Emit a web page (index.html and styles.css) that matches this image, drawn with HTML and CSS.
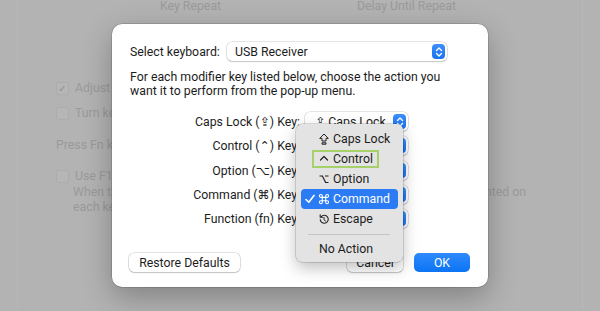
FILE: index.html
```html
<!DOCTYPE html>
<html lang="en">
<head>
    <meta charset="UTF-8">
    <meta name="viewport" content="width=device-width, initial-scale=1.0">
    <title>Modifier Keys</title>
    <link rel="stylesheet" href="styles.css">
</head>
<body>

<div class="prefs">
    <div class="sliderLabels">
        <span class="keyRepeat">Key Repeat</span>
        <span>Delay Until Repeat</span>
    </div>
    <div class="bgOptions">
        <div class="checkRow"><span class="box">&#10003;</span>Adjust keyboard brightness in low light</div>
        <div class="checkRow second"><span class="box"></span>Turn keyboard backlight off after 5 secs of inactivity</div>
        <div class="fnRow">Press Fn key to&nbsp;&nbsp;Show Emoji &amp; Symbols</div>
        <div class="checkRow fourth"><span class="box"></span>Use F1, F2, etc. keys as standard function keys</div>
        <p class="hint">When this option is selected, press the Fn key to use the special features printed on<br>each key.</p>
    </div>
</div>

<div class="sheet">
    <div class="kbRow">
        <span class="kbLabel">Select keyboard:</span>
        <div class="popup wide">
            <span class="popupText">USB Receiver</span>
            <span class="stepper">
                <svg width="8" height="12" viewBox="0 0 8 12"><path d="M1.5 4.5 L4 2 L6.5 4.5 M1.5 7.5 L4 10 L6.5 7.5" fill="none" stroke="#fff" stroke-width="1.4" stroke-linecap="round" stroke-linejoin="round"/></svg>
            </span>
        </div>
    </div>

    <p class="intro">For each modifier key listed below, choose the action you<br>want it to perform from the pop-up menu.</p>

    <div class="keys">
        <label>Caps Lock (&#8682;) Key:</label>
        <div class="popup"><span class="popupText">&#8682; Caps Lock</span><span class="stepper"><svg width="8" height="12" viewBox="0 0 8 12"><path d="M1.5 4.5 L4 2 L6.5 4.5 M1.5 7.5 L4 10 L6.5 7.5" fill="none" stroke="#fff" stroke-width="1.4" stroke-linecap="round" stroke-linejoin="round"/></svg></span></div>

        <label>Control (&#8963;) Key:</label>
        <div class="popup"><span class="popupText">&#8963; Control</span><span class="stepper"></span></div>

        <label>Option (&#8997;) Key:</label>
        <div class="popup"><span class="popupText">&#8997; Option</span><span class="stepper"></span></div>

        <label>Command (&#8984;) Key:</label>
        <div class="popup"><span class="popupText">&#8984; Command</span><span class="stepper"></span></div>

        <label>Function (fn) Key:</label>
        <div class="popup"><span class="popupText">fn Function</span><span class="stepper"></span></div>
    </div>

    <div class="buttons">
        <button class="btn restore">Restore Defaults</button>
        <span class="spacer"></span>
        <button class="btn small">Cancel</button>
        <button class="btn small primary">OK</button>
    </div>

    <div class="menu">
        <div class="item">
            <span class="check"></span>
            <svg class="icon" width="10" height="12" viewBox="0 0 10 12"><path d="M5 1 L9.3 5.4 H7 V8 H3 V5.4 H0.7 Z M3 9.8 H7 V11.2 H3 Z" fill="none" stroke="#222" stroke-width="1" stroke-linejoin="round"/></svg>
            <span>Caps Lock</span>
        </div>
        <div class="item">
            <span class="check"></span>
            <span class="annot">
                <svg class="icon" width="10" height="12" viewBox="0 0 10 12"><path d="M1.5 7 L5 3.5 L8.5 7" fill="none" stroke="#222" stroke-width="1.2" stroke-linecap="round" stroke-linejoin="round"/></svg>
                <span>Control</span>
            </span>
        </div>
        <div class="item">
            <span class="check"></span>
            <svg class="icon" width="10" height="12" viewBox="0 0 10 12"><path d="M0.5 3 H3.4 L6.6 9.5 H9.5 M6 3 H9.5" fill="none" stroke="#222" stroke-width="1.2"/></svg>
            <span>Option</span>
        </div>
        <div class="item selected">
            <span class="check"><svg width="10" height="10" viewBox="0 0 10 10"><path d="M1 5.5 L3.8 8.3 L9 1.5" fill="none" stroke="#fff" stroke-width="1.6" stroke-linecap="round" stroke-linejoin="round"/></svg></span>
            <svg class="icon" width="10" height="12" viewBox="0 0 12 12"><path d="M4 4 V2.25 A1.75 1.75 0 1 0 2.25 4 H9.75 A1.75 1.75 0 1 0 8 2.25 V9.75 A1.75 1.75 0 1 0 9.75 8 H2.25 A1.75 1.75 0 1 0 4 9.75 Z" fill="none" stroke="#fff" stroke-width="1.3"/></svg>
            <span>Command</span>
        </div>
        <div class="item">
            <span class="check"></span>
            <svg class="icon" width="10" height="12" viewBox="0 0 10 12"><path d="M2.2 3.6 A4 4 0 1 1 1.2 6.5" fill="none" stroke="#222" stroke-width="1.1" stroke-linecap="round"/><path d="M1.2 1.8 V4.2 H3.6" fill="none" stroke="#222" stroke-width="1.1" stroke-linecap="round" stroke-linejoin="round"/><path d="M5 4.5 V6.8 L6.5 8" fill="none" stroke="#222" stroke-width="1" stroke-linecap="round"/></svg>
            <span>Escape</span>
        </div>
        <div class="separator"></div>
        <div class="item">
            <span class="check"></span>
            <span>No Action</span>
        </div>
    </div>
</div>

</body>
</html>
```

FILE: styles.css
```css
body {
    margin: 0;
    padding: 0;
    width: 600px;
    height: 311px;
    overflow: hidden;
    position: relative;
    background: #b3b3b3;
    font-family: Roboto, "DejaVu Sans", sans-serif;
    font-size: 12.3px;
}

/* dimmed preferences window behind the sheet */
.prefs {
    height: 311px;
    margin: 0 17px;
    border-left: 1px solid rgba(255, 255, 255, 0.05);
    border-right: 1px solid rgba(255, 255, 255, 0.08);
    color: #9a9a9a;
    white-space: nowrap;
}

.sliderLabels {
    display: flex;
    padding-left: 142px;
    margin-top: -2px;
    line-height: 16px;
}

.keyRepeat {
    width: 197px;
}

.bgOptions {
    margin-top: 66px;
    padding-left: 38px;
}

.checkRow {
    display: flex;
    align-items: center;
    line-height: 16px;
}

.checkRow.second {
    margin-top: 9px;
}

.checkRow.fourth {
    margin-top: 15px;
}

.box {
    width: 11px;
    height: 11px;
    margin-right: 6px;
    border-radius: 3px;
    border: 1px solid rgba(0, 0, 0, 0.06);
    background: rgba(255, 255, 255, 0.05);
    font-size: 10px;
    line-height: 11px;
    text-align: center;
    color: #909090;
}

.fnRow {
    margin-top: 16px;
    line-height: 16px;
}

.hint {
    margin: 1px 0 0 17px;
    line-height: 15px;
}

/* modifier keys sheet */
.sheet {
    position: absolute;
    left: 112px;
    top: 24px;
    width: 376px;
    height: 263px;
    box-sizing: border-box;
    padding: 18px 18px 15px 17px;
    display: flex;
    flex-direction: column;
    background: #ffffff;
    border-radius: 10px;
    box-shadow: 0 0 0 0.5px rgba(0, 0, 0, 0.25), 0 10px 30px rgba(0, 0, 0, 0.28);
    color: #1c1c1c;
    white-space: nowrap;
}

.kbRow {
    display: flex;
    align-items: center;
    height: 19px;
}

.kbLabel {
    width: 97px;
    padding-left: 1px;
}

.popup {
    position: relative;
    display: flex;
    align-items: center;
    height: 19px;
    box-sizing: border-box;
    padding: 0 2px 0 8px;
    background: #ffffff;
    border-radius: 5px;
    box-shadow: 0 0 0 0.5px rgba(0, 0, 0, 0.2), 0 1px 1.5px rgba(0, 0, 0, 0.15);
}

.popup.wide {
    width: 220px;
}

.popupText {
    flex: 1;
    overflow: hidden;
}

.stepper {
    display: flex;
    align-items: center;
    justify-content: center;
    width: 13px;
    height: 15px;
    border-radius: 4px;
    background: linear-gradient(#3d8ffb, #1673f2);
}

.intro {
    margin: 9px 0 0;
    padding-left: 1px;
    line-height: 14px;
}

.keys {
    display: grid;
    grid-template-columns: 171px 103px;
    grid-auto-rows: 20px;
    column-gap: 5px;
    row-gap: 4.3px;
    margin-top: 14px;
}

.keys label {
    display: flex;
    align-items: center;
    justify-content: flex-end;
}

.keys .popup {
    padding-left: 10px;
}

.buttons {
    display: flex;
    gap: 11px;
    margin-top: auto;
}

.spacer {
    flex: 1;
}

.btn {
    height: 19px;
    padding: 0;
    border: none;
    border-radius: 5px;
    background: #ffffff;
    box-shadow: 0 0 0 0.5px rgba(0, 0, 0, 0.22), 0 1px 1.5px rgba(0, 0, 0, 0.15);
    font-family: inherit;
    font-size: 12.3px;
    color: #1c1c1c;
}

.restore {
    width: 111px;
}

.small {
    width: 56px;
}

.primary {
    background: linear-gradient(#2f8afc, #0c74f5);
    color: #ffffff;
    box-shadow: none;
}

/* pop-up menu, opened over the sheet */
.menu {
    position: absolute;
    left: 184px;
    top: 100px;
    width: 107px;
    height: 138px;
    box-sizing: border-box;
    padding: 5px 5px 3px;
    background: #e3e3e3;
    border-radius: 6px;
    box-shadow: 0 0 0 0.5px rgba(0, 0, 0, 0.25), 0 6px 16px rgba(0, 0, 0, 0.25);
    color: #1c1c1c;
}

.item {
    display: flex;
    align-items: center;
    height: 20px;
    padding-left: 4px;
    border-radius: 4px;
}

.item .check {
    display: flex;
    align-items: center;
    width: 14px;
}

.item .icon {
    margin-right: 4px;
    flex-shrink: 0;
}

.item.selected {
    background: #2b7bf5;
    color: #ffffff;
}

.annot {
    display: flex;
    align-items: center;
    height: 18px;
    box-sizing: border-box;
    margin-left: -7px;
    padding: 0 4px 0 5px;
    border: 2px solid #a6d06a;
}

.separator {
    height: 1px;
    margin: 5px 8px 4px 7px;
    background: rgba(0, 0, 0, 0.13);
}
```
